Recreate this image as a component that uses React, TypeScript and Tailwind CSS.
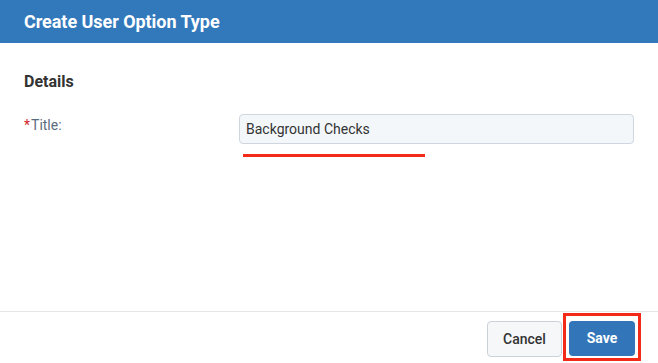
export default function App() {
  return (
    <div className="w-[658px] h-[363px] flex flex-col bg-white font-['Roboto',sans-serif] overflow-hidden">
      <header className="h-[43px] shrink-0 bg-[#3279bc] px-6 flex items-center">
        <h1 className="text-white text-[18px] font-bold leading-none tracking-[-0.05px]">Create User Option Type</h1>
      </header>
      <main className="flex-1 px-6 pt-[27px]">
        <h2 className="text-[16px] leading-6 font-bold text-[#333333]">Details</h2>
        <div className="mt-[20px] flex items-start">
          <label className="w-[215px] shrink-0 text-[14px] leading-5 text-[#5a6c80] pt-[1px]">
            <span className="text-[#d0272b] mr-[1px]">*</span>Title:
          </label>
          <div className="w-[398px]">
            <div className="h-[30px] rounded-[4px] border border-[#cfd6de] bg-[#f4f7fa] px-[6px] flex items-center text-[14px] text-[#333333]">
              Background Checks
            </div>
            <div className="mt-[10px] ml-[4px] w-[182px] h-[3px] bg-[#f32a18]" />
          </div>
        </div>
      </main>
      <footer className="h-[52px] shrink-0 border-t border-[#e6e6e6] pt-[9px] pr-[23px] flex justify-end items-start gap-[7px]">
        <button className="w-[75px] h-[36px] rounded-[4px] border border-[#cbd1d8] bg-[#f5f7f9] text-[14px] font-medium text-[#333333]">
          Cancel
        </button>
        <div className="relative">
          <button className="w-[66px] h-[35px] rounded-[4px] bg-[#3275b9] text-[14px] font-bold text-white">
            Save
          </button>
          <div className="absolute -left-[6px] -top-[8px] w-[78px] h-[48px] border-[3px] border-[#f32a18] pointer-events-none" />
        </div>
      </footer>
    </div>
  );
}
